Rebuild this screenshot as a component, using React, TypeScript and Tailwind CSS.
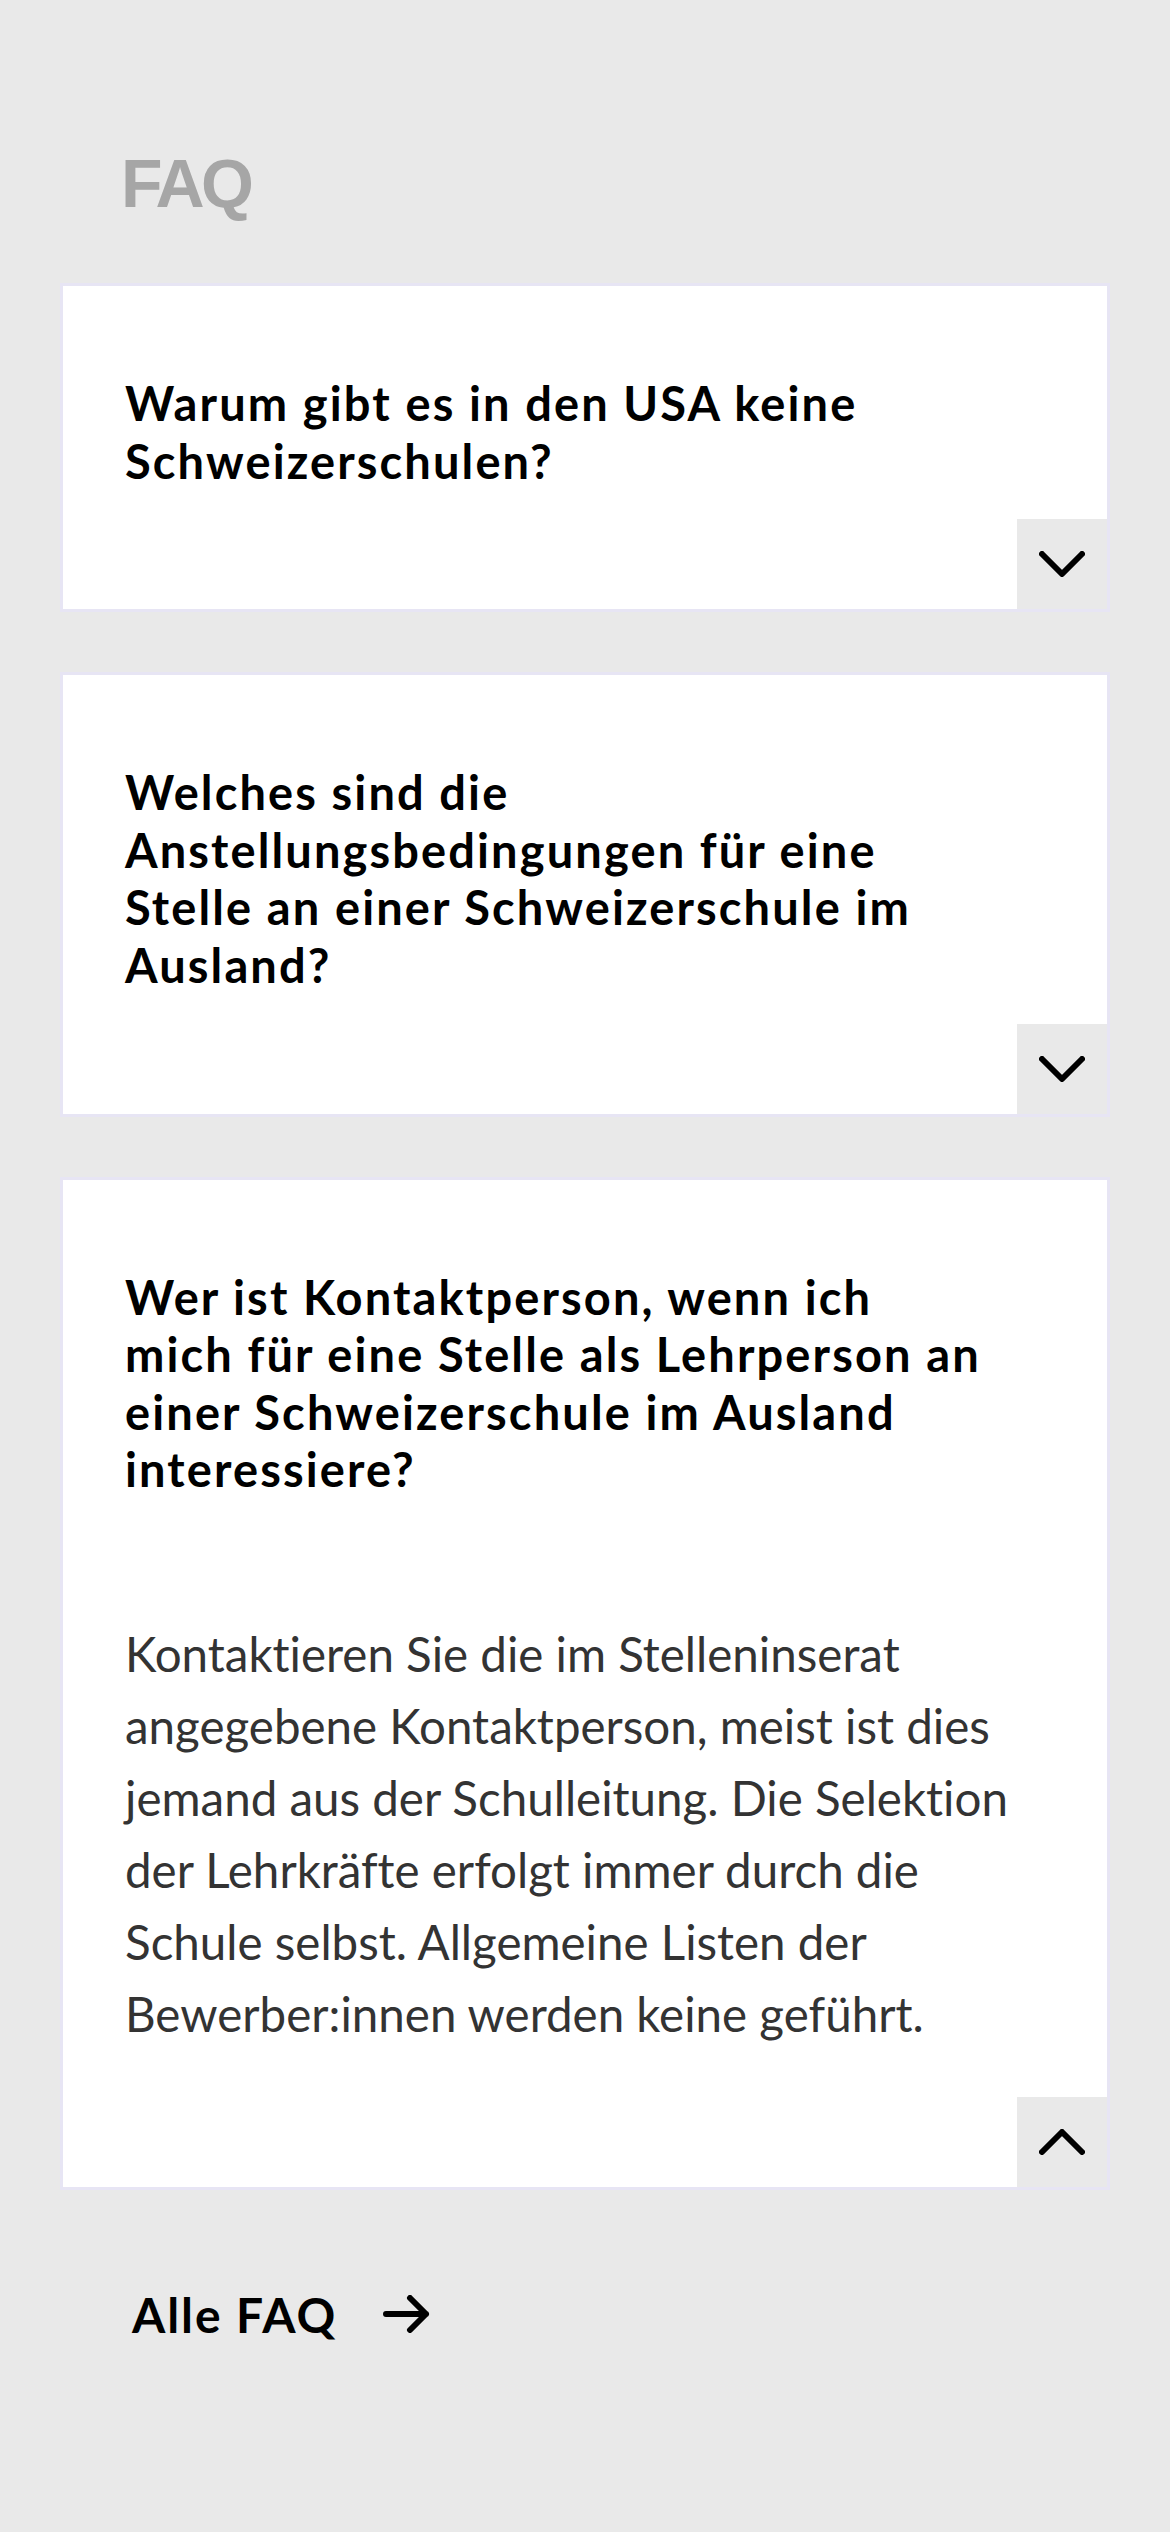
import React, { useState } from 'react';

type FaqItem = {
  id: string;
  question: React.ReactNode;
  answer: string;
};

const faqItems: FaqItem[] = [
  {
    id: 'usa',
    question: 'Warum gibt es in den USA keine Schweizerschulen?',
    answer:
      'In den USA gibt es derzeit keine vom Bund anerkannte Schweizerschule.',
  },
  {
    id: 'bedingungen',
    question:
      'Welches sind die Anstellungsbedingungen für eine Stelle an einer Schweizerschule im Ausland?',
    answer:
      'Die Anstellungsbedingungen werden von der jeweiligen Schule festgelegt.',
  },
  {
    id: 'kontakt',
    question: (
      <>
        Wer ist Kontaktperson, wenn ich
        <br />
        mich für eine Stelle als Lehrperson an einer Schweizerschule im Ausland
        interessiere?
      </>
    ),
    answer:
      'Kontaktieren Sie die im Stelleninserat angegebene Kontaktperson, meist ist dies jemand aus der Schulleitung. Die Selektion der Lehrkräfte erfolgt immer durch die Schule selbst. Allgemeine Listen der Bewerber:innen werden keine geführt.',
  },
];

const Chevron = ({ open }: { open: boolean }) => (
  <svg width="46" height="26" viewBox="0 0 46 26" fill="none" aria-hidden="true">
    <polyline
      points={open ? '3,23 23,3 43,23' : '3,3 23,23 43,3'}
      stroke="#000"
      strokeWidth="6"
      strokeLinecap="round"
      strokeLinejoin="round"
    />
  </svg>
);

const ArrowRight = () => (
  <svg width="47" height="38" viewBox="0 0 47 38" fill="none" aria-hidden="true">
    <path
      d="M3 19H43M27 3L43 19L27 35"
      stroke="#000"
      strokeWidth="6"
      strokeLinecap="round"
      strokeLinejoin="round"
    />
  </svg>
);

function FaqCard({ item, open, onToggle }: { item: FaqItem; open: boolean; onToggle: () => void }) {
  return (
    <div className="flex flex-col border-[3px] border-[#e7e5f4] bg-white">
      <h3 className="pl-[62px] pr-[112px] pt-[89px] font-['Lato',sans-serif] text-[47px] font-bold leading-[57.6px] tracking-[0.045em] text-black">
        {item.question}
      </h3>
      {open && (
        <p className="mt-[119px] pl-[62px] pr-[62px] font-['Lato',sans-serif] text-[47.5px] leading-[72px] text-[#333333]">
          {item.answer}
        </p>
      )}
      <div className={open ? 'mt-[47px] flex justify-end' : 'mt-[29px] flex justify-end'}>
        <button
          type="button"
          onClick={onToggle}
          className="flex h-[90px] w-[90px] items-center justify-center bg-[#e9e9e9]"
          aria-expanded={open}
        >
          <Chevron open={open} />
        </button>
      </div>
    </div>
  );
}

export default function App() {
  const [openId, setOpenId] = useState<string | null>('kontakt');

  return (
    <div className="min-h-[2532px] bg-[#e9e9e9] px-[60px] pt-[149px] [font-variant-ligatures:no-common-ligatures]">
      <h2 className="pl-[61px] font-['Liberation_Sans',Arial,sans-serif] text-[68px] font-bold leading-none tracking-[-0.05em] text-[#a6a6a6]">
        FAQ
      </h2>

      <div className="mt-[66px] flex flex-col gap-[60px]">
        {faqItems.map((item) => (
          <FaqCard
            key={item.id}
            item={item}
            open={openId === item.id}
            onToggle={() => setOpenId(openId === item.id ? null : item.id)}
          />
        ))}
      </div>

      <a
        href="#"
        className="mt-[97px] ml-[72px] flex w-fit items-center gap-[46px] font-['Lato',sans-serif] text-[48px] font-bold leading-[55px] tracking-[0.04em] text-black"
      >
        Alle FAQ
        <ArrowRight />
      </a>
    </div>
  );
}
